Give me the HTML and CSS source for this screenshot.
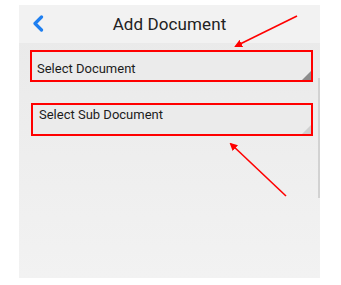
FILE: index.html
```html
<!DOCTYPE html>
<html lang="en">
<head>
  <meta charset="UTF-8" />
  <meta name="viewport" content="width=device-width, initial-scale=1.0"/>
  <title>Add Document</title>
  <link rel="stylesheet" href="styles.css">
</head>
<body>
  <div class="screen">
    <div class="header">
      <svg class="back" width="12" height="17" viewBox="0 0 12 17">
        <path d="M9.5 2 L3 8.5 L9.5 15" fill="none" stroke="#1f7ff0" stroke-width="3.2" stroke-linecap="round" stroke-linejoin="round"/>
      </svg>
      <h1>Add Document</h1>
    </div>

    <div class="content">
      <div class="picker first">
        <span>Select Document</span>
        <i class="corner"></i>
      </div>
      <div class="picker second">
        <span>Select Sub Document</span>
        <i class="corner"></i>
      </div>
    </div>
    <div class="scrollbar"></div>
  </div>

  <!-- annotation arrows -->
  <svg class="arrows" width="341" height="285" viewBox="0 0 341 285">
    <defs>
      <marker id="head" markerWidth="8" markerHeight="8" refX="6" refY="4" orient="auto" markerUnits="userSpaceOnUse">
        <path d="M0 0 L8 4 L0 8 Z" fill="#f00"/>
      </marker>
    </defs>
    <line x1="297" y1="16" x2="236" y2="46" stroke="#f00" stroke-width="1.6" marker-end="url(#head)"/>
    <line x1="286" y1="196" x2="231" y2="144" stroke="#f00" stroke-width="1.6" marker-end="url(#head)"/>
  </svg>
</body>
</html>
```

FILE: styles.css
```css
body { margin: 0; background: #fff; font-family: Roboto, "Liberation Sans", Arial, sans-serif; }
.screen { position: relative; width: 301px; height: 273px; margin: 5px 0 0 19px; background: linear-gradient(#e9e9e9, #f2f2f2); }
.header { position: relative; height: 38px; background: #f2f2f2; display: flex; align-items: center; justify-content: center; }
.back { position: absolute; left: 13px; top: 10px; }
.header h1 { margin: 0; font-size: 17px; font-weight: normal; color: #222; letter-spacing: 0.1px; }
.content { padding: 7px 7px 0 11px; }
.picker { position: relative; border: 2px solid #f00; background: #ebebeb; font-size: 13px; line-height: 16px; color: #1c1c1c; box-sizing: border-box; }
.picker.first { height: 32px; padding: 9px 5px 0; }
.picker.second { height: 33px; margin: 21px 0 0 1px; padding: 2px 6px 0; }
.corner { position: absolute; right: 0; bottom: 0; width: 0; height: 0; border-style: solid; border-width: 0 0 9px 9px; border-color: transparent transparent #8c8c8c transparent; }
.picker.second .corner { border-color: transparent transparent #cfcfcf transparent; }
.scrollbar { position: absolute; right: 0; top: 73px; width: 2px; height: 120px; background: #d2d2d2; }
.arrows { position: absolute; left: 0; top: 0; pointer-events: none; }
```
